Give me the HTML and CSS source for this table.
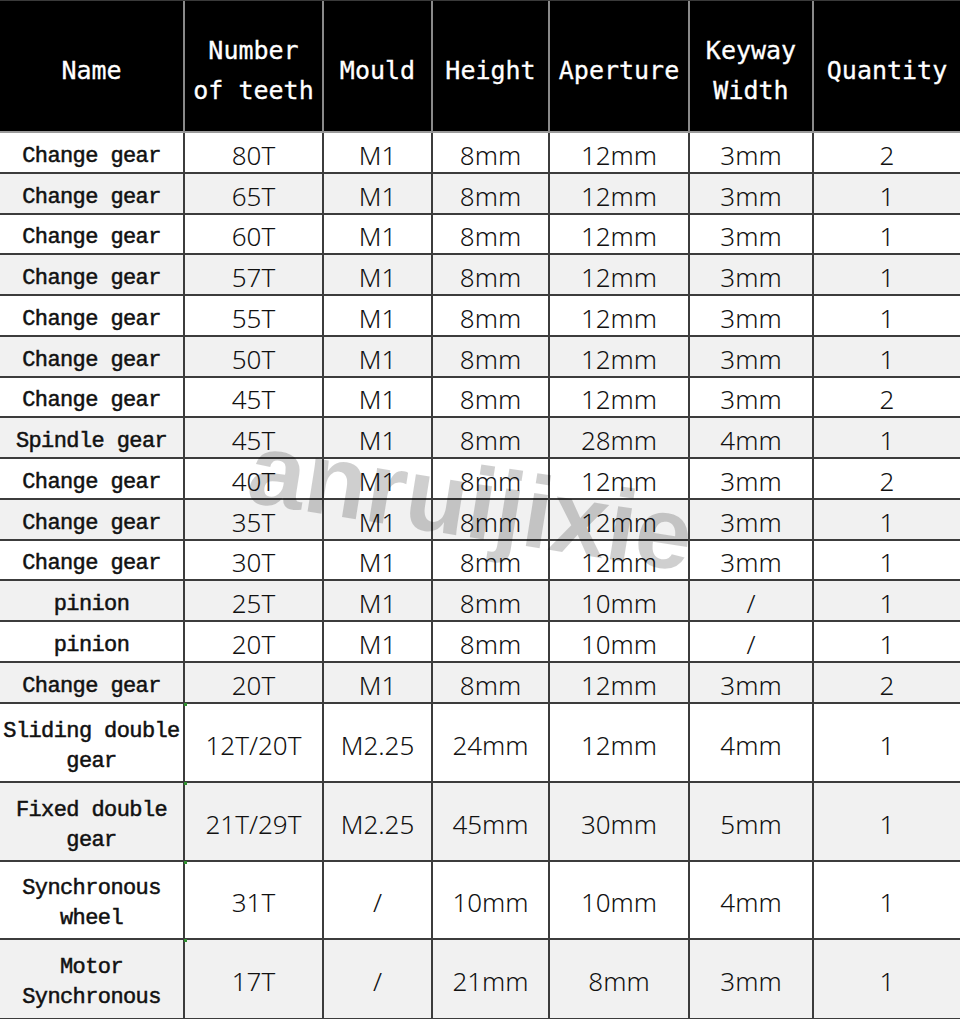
FILE: index.html
```html
<!DOCTYPE html>
<html lang="en">
<head>
<meta charset="utf-8">
<title>Gear list</title>
<link rel="stylesheet" href="styles.css">
</head>
<body>
<div class="sheet">
  <div class="grid">
    <div class="h">Name</div>
    <div class="h">Number<br>of teeth</div>
    <div class="h">Mould</div>
    <div class="h">Height</div>
    <div class="h">Aperture</div>
    <div class="h">Keyway<br>Width</div>
    <div class="h last">Quantity</div>

    <div class="n">Change gear</div><div class="d">80T</div><div class="d">M1</div><div class="d">8mm</div><div class="d">12mm</div><div class="d">3mm</div><div class="d last">2</div>
    <div class="n g">Change gear</div><div class="d g">65T</div><div class="d g">M1</div><div class="d g">8mm</div><div class="d g">12mm</div><div class="d g">3mm</div><div class="d g last">1</div>
    <div class="n">Change gear</div><div class="d">60T</div><div class="d">M1</div><div class="d">8mm</div><div class="d">12mm</div><div class="d">3mm</div><div class="d last">1</div>
    <div class="n g">Change gear</div><div class="d g">57T</div><div class="d g">M1</div><div class="d g">8mm</div><div class="d g">12mm</div><div class="d g">3mm</div><div class="d g last">1</div>
    <div class="n">Change gear</div><div class="d">55T</div><div class="d">M1</div><div class="d">8mm</div><div class="d">12mm</div><div class="d">3mm</div><div class="d last">1</div>
    <div class="n g">Change gear</div><div class="d g">50T</div><div class="d g">M1</div><div class="d g">8mm</div><div class="d g">12mm</div><div class="d g">3mm</div><div class="d g last">1</div>
    <div class="n">Change gear</div><div class="d">45T</div><div class="d">M1</div><div class="d">8mm</div><div class="d">12mm</div><div class="d">3mm</div><div class="d last">2</div>
    <div class="n g">Spindle gear</div><div class="d g">45T</div><div class="d g">M1</div><div class="d g">8mm</div><div class="d g">28mm</div><div class="d g">4mm</div><div class="d g last">1</div>
    <div class="n">Change gear</div><div class="d">40T</div><div class="d">M1</div><div class="d">8mm</div><div class="d">12mm</div><div class="d">3mm</div><div class="d last">2</div>
    <div class="n g">Change gear</div><div class="d g">35T</div><div class="d g">M1</div><div class="d g">8mm</div><div class="d g">12mm</div><div class="d g">3mm</div><div class="d g last">1</div>
    <div class="n">Change gear</div><div class="d">30T</div><div class="d">M1</div><div class="d">8mm</div><div class="d">12mm</div><div class="d">3mm</div><div class="d last">1</div>
    <div class="n g">pinion</div><div class="d g">25T</div><div class="d g">M1</div><div class="d g">8mm</div><div class="d g">10mm</div><div class="d g">/</div><div class="d g last">1</div>
    <div class="n">pinion</div><div class="d">20T</div><div class="d">M1</div><div class="d">8mm</div><div class="d">10mm</div><div class="d">/</div><div class="d last">1</div>
    <div class="n g">Change gear</div><div class="d g">20T</div><div class="d g">M1</div><div class="d g">8mm</div><div class="d g">12mm</div><div class="d g">3mm</div><div class="d g last">2</div>

    <div class="n">Sliding double<br>gear</div><div class="d mark">12T/20T</div><div class="d">M2.25</div><div class="d">24mm</div><div class="d">12mm</div><div class="d">4mm</div><div class="d last">1</div>
    <div class="n g">Fixed double<br>gear</div><div class="d g mark">21T/29T</div><div class="d g">M2.25</div><div class="d g">45mm</div><div class="d g">30mm</div><div class="d g">5mm</div><div class="d g last">1</div>
    <div class="n">Synchronous<br>wheel</div><div class="d mark">31T</div><div class="d">/</div><div class="d">10mm</div><div class="d">10mm</div><div class="d">4mm</div><div class="d last">1</div>
    <div class="n g">Motor<br>Synchronous</div><div class="d g mark">17T</div><div class="d g">/</div><div class="d g">21mm</div><div class="d g">8mm</div><div class="d g">3mm</div><div class="d g last">1</div>
  </div>
  <div class="watermark">anruijixie</div>
</div>
</body>
</html>
```

FILE: styles.css
```css
html, body {
  margin: 0;
  padding: 0;
  background: #ffffff;
}

.sheet {
  position: relative;
  width: 960px;
  height: 1019px;
  overflow: hidden;
}

.grid {
  display: grid;
  grid-template-columns: 185px 139px 109px 117px 140px 124px 146px;
  grid-template-rows: 132px 41px 41px 40px 41px 41px 41px 40px 41px 41px 41px 40px 41px 41px 41px 79px 79px 78px 80px;
  border-top: 1px solid #3a3a3a;
  box-sizing: border-box;
  height: 1019px;
}

.grid > div {
  box-sizing: border-box;
  display: flex;
  align-items: center;
  justify-content: center;
  text-align: center;
  border-right: 2px solid #3c3c3c;
  border-bottom: 2px solid #3c3c3c;
  position: relative;
}

.grid > div.last {
  border-right: none;
}

.h {
  background: #000000;
  color: #ffffff;
  font-family: "DejaVu Sans Mono", "Liberation Mono", monospace;
  font-size: 25px;
  line-height: 40px;
  -webkit-text-stroke: 0.3px #ffffff;
  border-right-color: #8a8a8a !important;
  border-bottom-color: #9a9a9a !important;
  padding-top: 10px;
}

.n {
  font-family: "Liberation Mono", "DejaVu Sans Mono", monospace;
  font-weight: normal;
  font-size: 22px;
  letter-spacing: -0.6px;
  line-height: 30px;
  color: #111111;
  -webkit-text-stroke: 0.5px #111111;
  background: #ffffff;
  padding-top: 8px;
}

.d {
  font-family: "Noto Sans", "Liberation Sans", sans-serif;
  font-weight: 300;
  font-size: 26px;
  color: #111111;
  background: #ffffff;
  padding-top: 4px;
}

.g {
  background: #f1f1f1 !important;
}

.mark::before {
  content: "";
  position: absolute;
  left: -1px;
  top: -1px;
  width: 3px;
  height: 3px;
  background: #2f8f2f;
}

.watermark {
  position: absolute;
  left: 250px;
  top: 416px;
  font-family: "Liberation Sans", Arial, sans-serif;
  font-weight: bold;
  font-size: 102px;
  line-height: 1;
  color: rgba(0, 0, 0, 0.19);
  transform: rotate(9deg);
  transform-origin: left center;
  pointer-events: none;
  white-space: nowrap;
}
```
